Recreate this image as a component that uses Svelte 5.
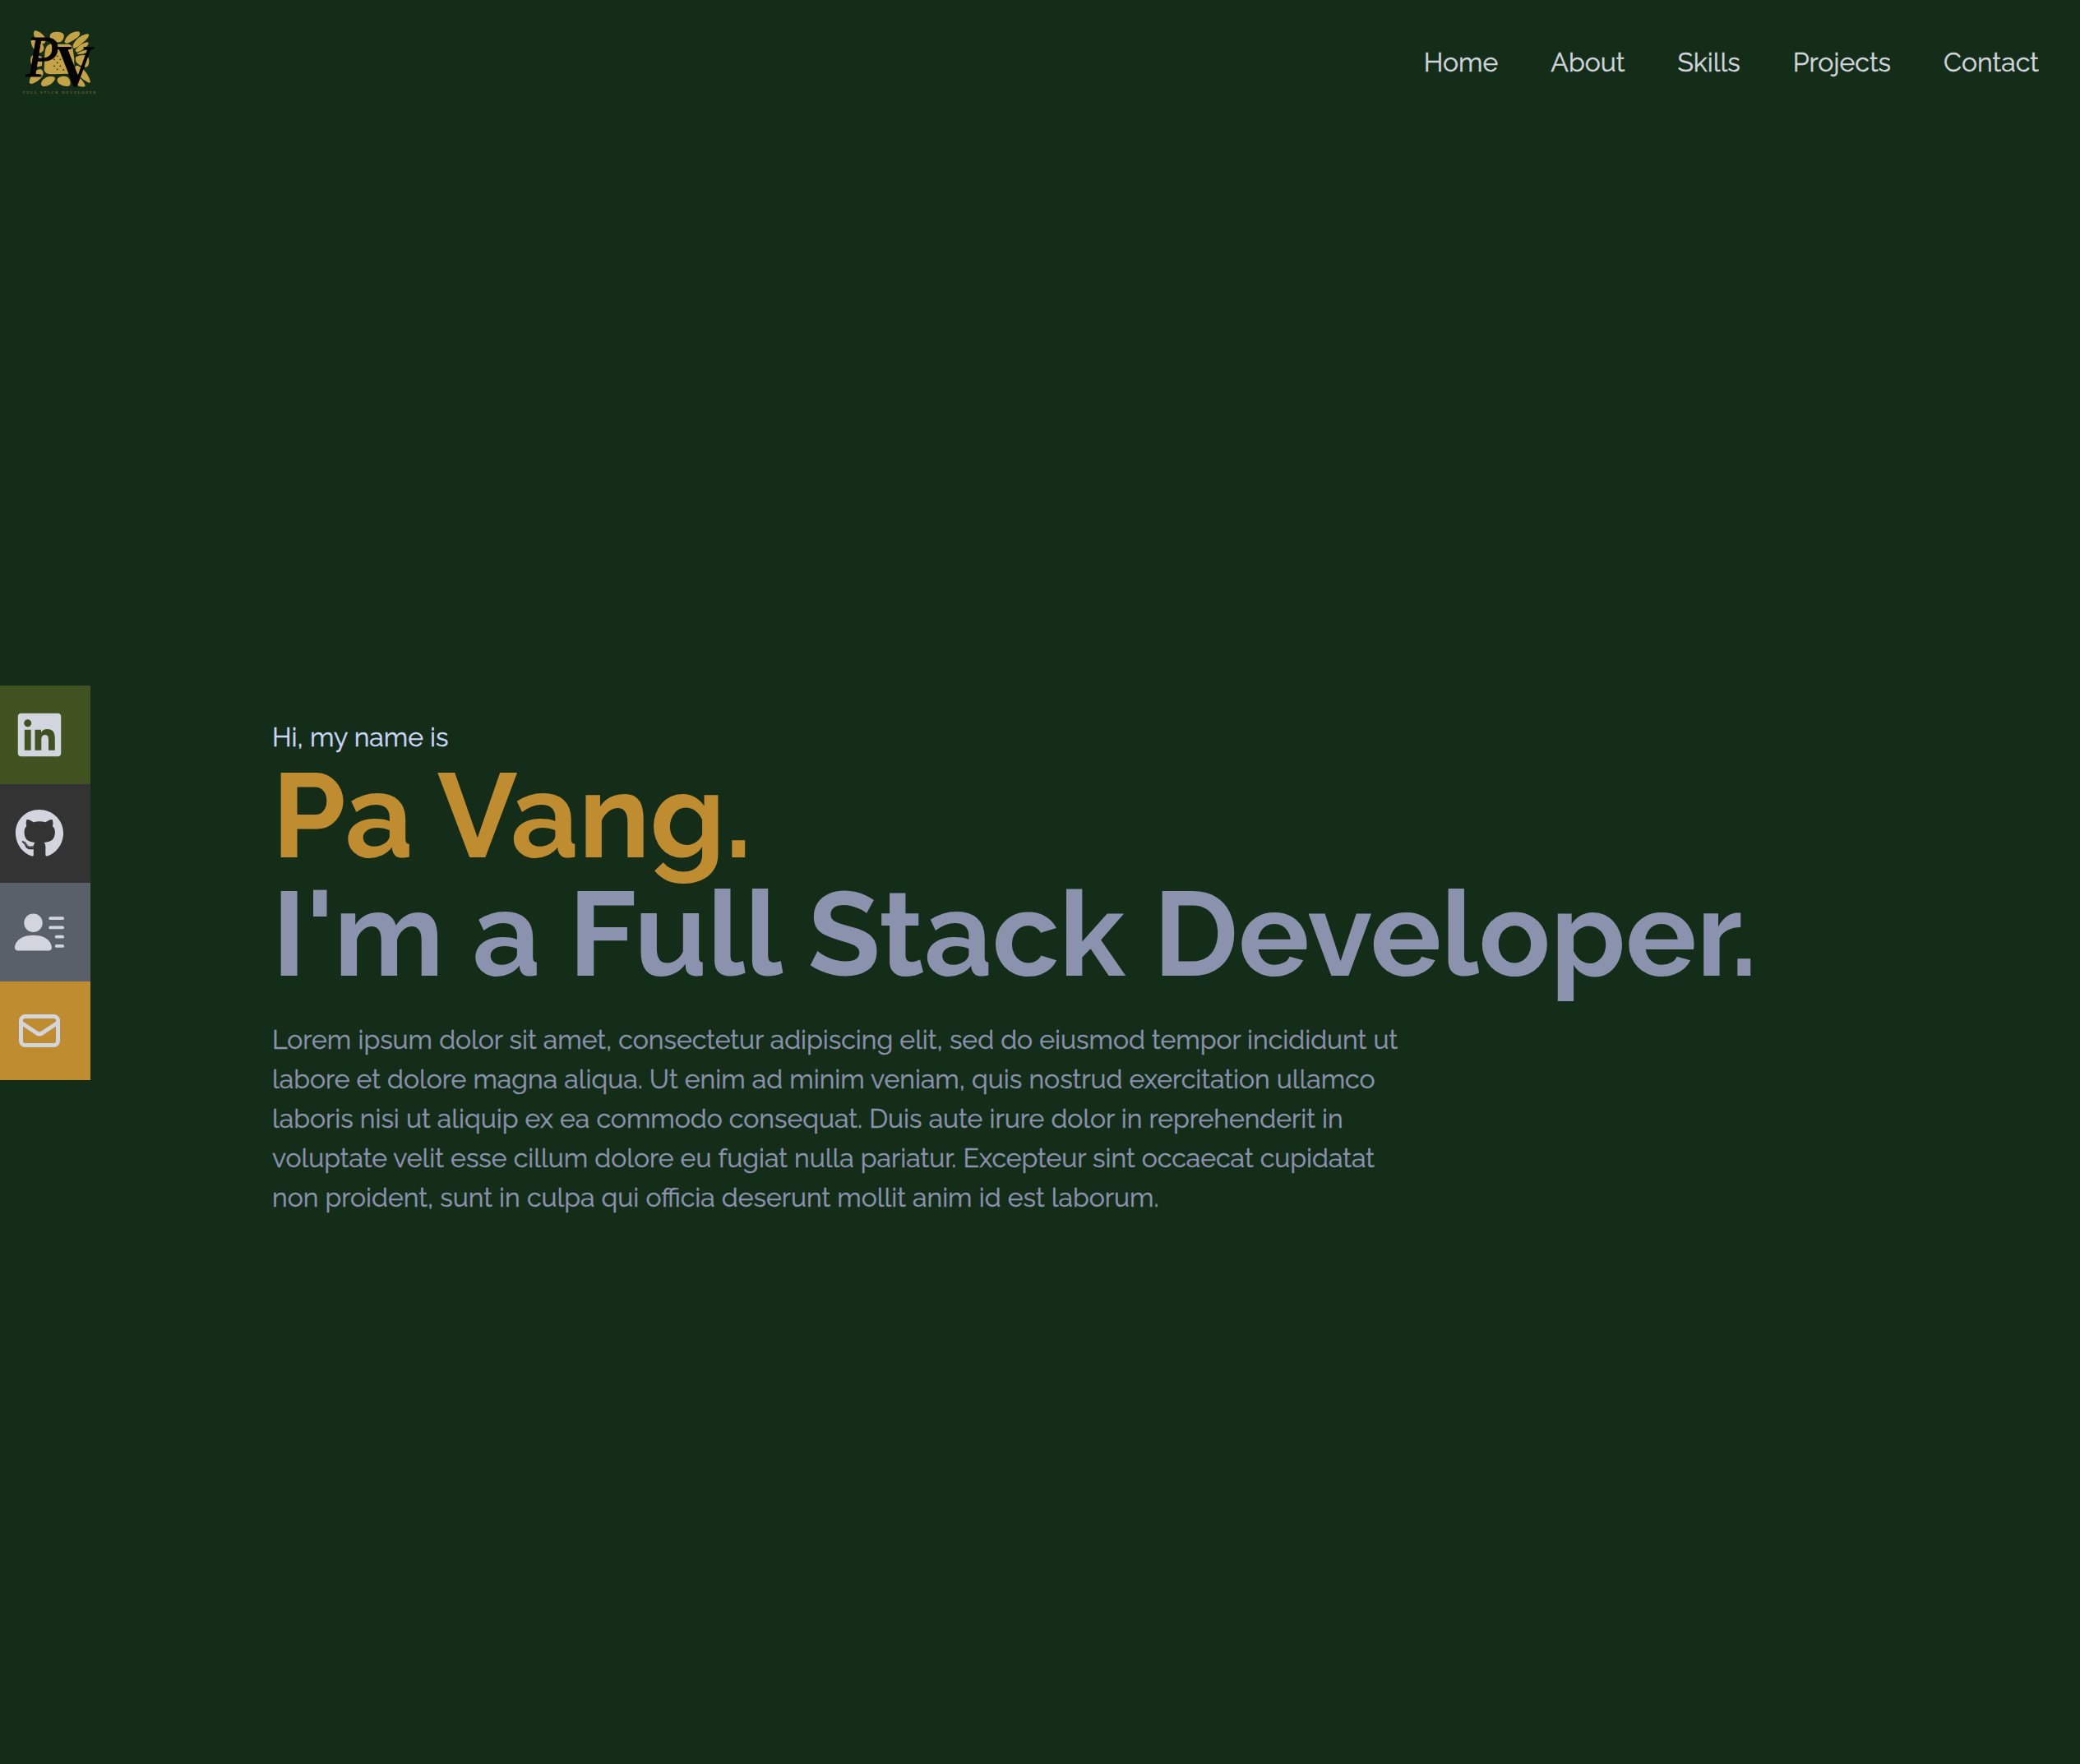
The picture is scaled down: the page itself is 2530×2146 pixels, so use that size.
<script>
  const nav = ['Home', 'About', 'Skills', 'Projects', 'Contact'];

  const petals = [
    'M95 53Q104 49 122 63Q139 77 137 88Q134 103 122 100Q103 92 95 73Q91 60 95 53Z',
    'M84 88Q90 82 105 90Q128 99 130 112Q131 131 116 133Q97 131 88 110Q81 94 84 88Z',
    'M153 66Q158 56 178 56Q199 56 203 67Q206 76 199 86Q192 96 178 94Q164 93 155 82Q150 74 153 66Z',
    'M206 90Q211 72 231 60Q252 51 260 57Q265 66 254 76Q238 88 220 97Q205 101 206 90Z',
    'M237 103Q246 83 269 70Q291 60 294 66Q296 77 273 95Q251 114 241 117Q233 113 237 103Z',
    'M247 119Q260 103 281 95Q291 91 293 98Q290 110 270 122Q251 134 247 129Q243 125 247 119Z',
    'M252 135Q271 122 288 123Q294 126 289 131Q275 138 256 138Q249 138 252 135Z',
    'M247 148Q264 139 282 142Q296 147 295 164Q295 182 283 185Q262 182 249 168Q243 155 247 148Z',
    'M247 180Q253 176 268 188Q292 207 300 238Q300 245 291 241Q262 225 245 201Q241 187 247 180Z',
    'M237 210Q242 205 253 216Q274 235 281 251Q282 259 263 256Q240 250 235 234Q231 220 237 210Z',
    'M181 226Q188 217 205 218Q222 219 226 236Q229 252 220 254Q202 257 187 247Q174 237 181 226Z',
    'M139 222Q150 217 165 220Q176 224 166 237Q151 255 128 256Q117 252 121 240Q127 228 139 222Z',
    'M91 207Q104 191 120 193Q130 199 127 213Q119 231 96 242Q79 250 77 241Q78 222 91 207Z',
    'M83 148Q88 139 99 140Q112 144 122 146Q126 163 123 180Q107 186 90 182Q78 170 83 148Z',
    'M139 112Q146 99 164 101L219 101Q232 102 236 120Q243 154 241 184Q241 209 222 209L157 211Q133 211 131 196Q132 169 133 140Q134 121 139 112Z'
  ];

  const seeds = [
    [180, 145], [168, 157], [190, 157], [179, 169], [168, 181],
    [190, 181], [179, 193], [202, 195]
  ];
</script>

<div class="page">
  <header>
    <svg class="logo" viewBox="0 0 390 330">
      <g class="petals">
        {#each petals as d}
          <path {d} />
        {/each}
      </g>
      <g class="seeds">
        {#each seeds as [cx, cy]}
          <circle {cx} {cy} r="2.8" />
        {/each}
      </g>
      <text class="letter italic" x="65" y="219" textLength="120" lengthAdjust="spacingAndGlyphs">P</text>
      <text class="letter bold" x="173" y="252" textLength="142" lengthAdjust="spacingAndGlyphs">V</text>
      <text class="caption" x="53" y="283" textLength="267">FULL STACK DEVELOPER</text>
    </svg>
    <nav>
      {#each nav as item}
        <span>{item}</span>
      {/each}
    </nav>
  </header>

  <main>
    <aside>
      <div class="tile linkedin">
        <svg viewBox="0 0 448 512"><path d="M416 32H31.9C14.3 32 0 46.5 0 64.3v383.4C0 465.5 14.3 480 31.9 480H416c17.6 0 32-14.5 32-32.3V64.3c0-17.8-14.4-32.3-32-32.3zM135.4 416H69V202.2h66.5V416zm-33.2-243c-21.3 0-38.5-17.3-38.5-38.5S80.9 96 102.2 96c21.2 0 38.5 17.3 38.5 38.5 0 21.3-17.2 38.5-38.5 38.5zm282.1 243h-66.4V312c0-24.8-.5-56.7-34.5-56.7-34.6 0-39.9 27-39.9 54.9V416h-66.4V202.2h63.7v29.2h.9c8.9-16.8 30.6-34.5 62.9-34.5 67.2 0 79.7 44.3 79.7 101.9V416z" /></svg>
      </div>
      <div class="tile github">
        <svg viewBox="0 0 496 512"><path d="M165.9 397.4c0 2-2.3 3.6-5.2 3.6-3.3.3-5.6-1.3-5.6-3.6 0-2 2.3-3.6 5.2-3.6 3-.3 5.6 1.3 5.6 3.6zm-31.1-4.5c-.7 2 1.3 4.3 4.3 4.9 2.6 1 5.6 0 6.2-2s-1.3-4.3-4.3-5.2c-2.6-.7-5.5.3-6.2 2.3zm44.2-1.7c-2.9.7-4.9 2.6-4.6 4.9.3 2 2.9 3.3 5.9 2.6 2.9-.7 4.9-2.6 4.6-4.6-.3-1.9-3-3.2-5.9-2.9zM244.8 8C106.1 8 0 113.3 0 252c0 110.9 69.8 205.8 169.5 239.2 12.8 2.3 17.3-5.6 17.3-12.1 0-6.2-.3-40.4-.3-61.4 0 0-70 15-84.7-29.8 0 0-11.4-29.1-27.8-36.6 0 0-22.9-15.7 1.6-15.4 0 0 24.9 2 38.6 25.8 21.9 38.6 58.6 27.5 72.9 20.9 2.3-16 8.8-27.1 16-33.7-55.9-6.2-112.3-14.3-112.3-110.5 0-27.5 7.6-41.3 23.6-58.9-2.6-6.5-11.1-33.3 2.6-67.9 20.9-6.5 69 27 69 27 20-5.6 41.5-8.5 62.8-8.5s42.8 2.9 62.8 8.5c0 0 48.1-33.6 69-27 13.7 34.7 5.2 61.4 2.6 67.9 16 17.7 25.8 31.5 25.8 58.9 0 96.5-58.9 104.2-114.8 110.5 9.2 7.9 17 22.9 17 46.4 0 33.7-.3 75.4-.3 83.6 0 6.5 4.6 14.4 17.3 12.1C428.2 457.8 496 362.9 496 252 496 113.3 383.5 8 244.8 8zM97.2 352.9c-1.3 1-1 3.3.7 5.2 1.6 1.6 3.9 2.3 5.2 1 1.3-1 1-3.3-.7-5.2-1.6-1.6-3.9-2.3-5.2-1zm-10.8-8.1c-.7 1.3.3 2.9 2.3 3.9 1.6 1 3.6.7 4.3-.7.7-1.3-.3-2.9-2.3-3.9-2-.6-3.6-.3-4.3.7zm32.4 35.6c-1.6 1.3-1 4.3 1.3 6.2 2.3 2.3 5.2 2.6 6.5 1 1.3-1.3.7-4.3-1.3-6.2-2.2-2.3-5.2-2.6-6.5-1zm-11.4-14.7c-1.6 1-1.6 3.6 0 5.9 1.6 2.3 4.3 3.3 5.6 2.3 1.6-1.3 1.6-3.9 0-6.2-1.4-2.3-4-3.3-5.6-2z" /></svg>
      </div>
      <div class="tile resume">
        <svg viewBox="0 0 16 16"><path d="M6 8a3 3 0 1 0 0-6 3 3 0 0 0 0 6zm-5 6s-1 0-1-1 1-4 6-4 6 3 6 4-1 1-1 1H1zM11 3.5a.5.5 0 0 1 .5-.5h4a.5.5 0 0 1 0 1h-4a.5.5 0 0 1-.5-.5zm.5 2.5a.5.5 0 0 0 0 1h4a.5.5 0 0 0 0-1h-4zm2 3a.5.5 0 0 0 0 1h2a.5.5 0 0 0 0-1h-2zm0 3a.5.5 0 0 0 0 1h2a.5.5 0 0 0 0-1h-2z" /></svg>
      </div>
      <div class="tile mail">
        <svg class="outline" viewBox="0 0 24 24"><path d="M3 8l7.89 5.26a2 2 0 002.22 0L21 8M5 19h14a2 2 0 002-2V7a2 2 0 00-2-2H5a2 2 0 00-2 2v10a2 2 0 002 2z" /></svg>
      </div>
    </aside>

    <section>
      <p class="greeting">Hi, my name is</p>
      <h1>Pa Vang.</h1>
      <h2>I'm a Full Stack Developer.</h2>
      <p class="bio">
        Lorem ipsum dolor sit amet, consectetur adipiscing elit, sed do eiusmod tempor incididunt ut
        labore et dolore magna aliqua. Ut enim ad minim veniam, quis nostrud exercitation ullamco
        laboris nisi ut aliquip ex ea commodo consequat. Duis aute irure dolor in reprehenderit in
        voluptate velit esse cillum dolore eu fugiat nulla pariatur. Excepteur sint occaecat cupidatat
        non proident, sunt in culpa qui officia deserunt mollit anim id est laborum.
      </p>
    </section>
  </main>
</div>

<style>
  :global(body) {
    margin: 0;
    background: #142d19;
  }
  .page {
    box-sizing: border-box;
    min-height: 2146px;
    background: #142d19;
    font-family: Raleway, Lato, sans-serif;
    font-size: 32px;
    line-height: 48px;
  }
  header {
    box-sizing: border-box;
    height: 160px;
    padding: 20px 50px 0 10px;
    display: flex;
    justify-content: space-between;
    align-items: flex-start;
  }
  .logo {
    width: 130px;
    height: 110px;
  }
  .petals { fill: #c5a244; }
  .seeds { fill: #2f3819; }
  .letter {
    font-family: 'Liberation Serif', serif;
    font-size: 218px;
    fill: #000;
  }
  .italic {
    font-style: italic;
    stroke: #000;
    stroke-width: 3;
  }
  .bold { font-weight: 700; }
  .caption {
    font-family: 'Liberation Serif', serif;
    font-size: 15px;
    fill: #8a7d38;
  }
  nav {
    display: flex;
    gap: 64px;
    padding-top: 32px;
    color: #d1d5db;
    -webkit-text-stroke: 0.4px currentColor;
  }
  main {
    display: flex;
    align-items: flex-start;
    padding-top: 674px;
  }
  aside {
    width: 110px;
    flex: none;
  }
  .tile {
    box-sizing: border-box;
    height: 120px;
    padding-left: 18px;
    display: flex;
    align-items: center;
  }
  .tile svg {
    width: 60px;
    height: 60px;
    fill: #d2d5dd;
  }
  .tile .outline {
    fill: none;
    stroke: #d2d5dd;
    stroke-width: 2;
    stroke-linecap: round;
    stroke-linejoin: round;
  }
  .linkedin { background: #3f521f; }
  .github { background: #333333; }
  .resume { background: #596069; }
  .mail { background: #bf8c2f; }
  section {
    padding: 39px 0 0 221px;
  }
  h1,
  h2,
  p {
    margin: 0;
  }
  .greeting {
    color: #ccd6f6;
    -webkit-text-stroke: 0.4px currentColor;
  }
  h1,
  h2 {
    font-size: 144px;
    font-weight: 700;
    line-height: 144px;
  }
  h1 { color: #bf8c2f; }
  h2 { color: #8b92ad; }
  .bio {
    width: 1400px;
    padding-top: 32px;
    color: #8b92ad;
    -webkit-text-stroke: 0.4px currentColor;
  }
</style>
